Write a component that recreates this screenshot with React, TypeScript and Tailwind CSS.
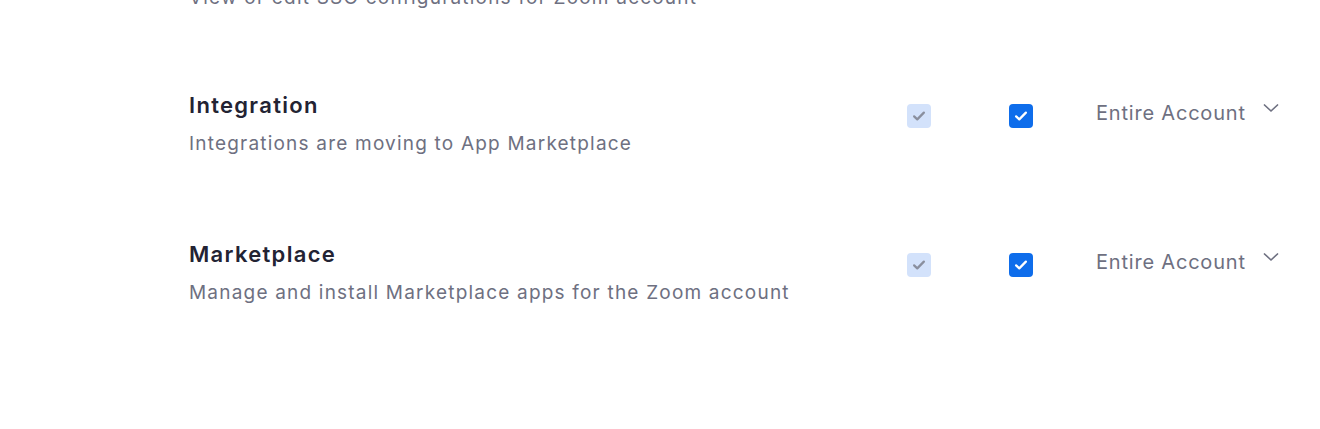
const rows = [
  { title: 'Integration', desc: 'Integrations are moving to App Marketplace' },
  { title: 'Marketplace', desc: 'Manage and install Marketplace apps for the Zoom account' },
];

function Check({ disabled }: { disabled?: boolean }) {
  return (
    <div
      className={
        'w-6 h-6 rounded-[4px] flex items-center justify-center ' +
        (disabled ? 'bg-[#d3e2fb]' : 'bg-[#0e6deb]')
      }
    >
      <svg viewBox="0 0 24 24" className="w-[18px] h-[18px]" fill="none">
        <path
          d="M5.5 12.5l4.2 4L18.5 7.5"
          stroke={disabled ? '#8a8f9e' : '#ffffff'}
          strokeWidth={3}
          strokeLinecap="round"
          strokeLinejoin="round"
        />
      </svg>
    </div>
  );
}

export default function App() {
  return (
    <main className="w-[1320px] h-[429px] bg-white overflow-hidden font-['Inter',sans-serif]">
      <div className="pl-[189px] -mt-[14px]">
        <p className="text-[19px] leading-[24px] tracking-[1.2px] text-[#6e7081] whitespace-nowrap">
          View or edit SSO configurations for Zoom account
        </p>
      </div>

      <div className="mt-[72px]">
        {rows.map((r) => (
          <div key={r.title} className="flex h-[149px] pl-[189px] pr-[41px]">
            <div className="flex-1 pt-[9px]">
              <h2 className="text-[22px] leading-[28px] font-semibold tracking-[1.3px] text-[#232333]">
                {r.title}
              </h2>
              <p className="mt-[13px] text-[19px] leading-[24px] tracking-[1.2px] text-[#6e7081]">{r.desc}</p>
            </div>
            <div className="w-[372px] flex items-start pt-[22px]">
              <div className="w-[102px]">
                <Check disabled />
              </div>
              <div className="w-[87px]">
                <Check />
              </div>
              <div className="flex-1 flex items-start justify-between text-[#6e7081]">
                <span className="text-[20px] leading-[24px] tracking-[0.8px] -mt-[3px] whitespace-nowrap">
                  Entire Account
                </span>
                <svg viewBox="0 0 16 10" className="w-4 h-[10px] -mt-[1px]" fill="none">
                  <path d="M1.5 2L8 8L14.5 2" stroke="#6e7081" strokeWidth={1.7} strokeLinecap="round" strokeLinejoin="round" />
                </svg>
              </div>
            </div>
          </div>
        ))}
      </div>
    </main>
  );
}
